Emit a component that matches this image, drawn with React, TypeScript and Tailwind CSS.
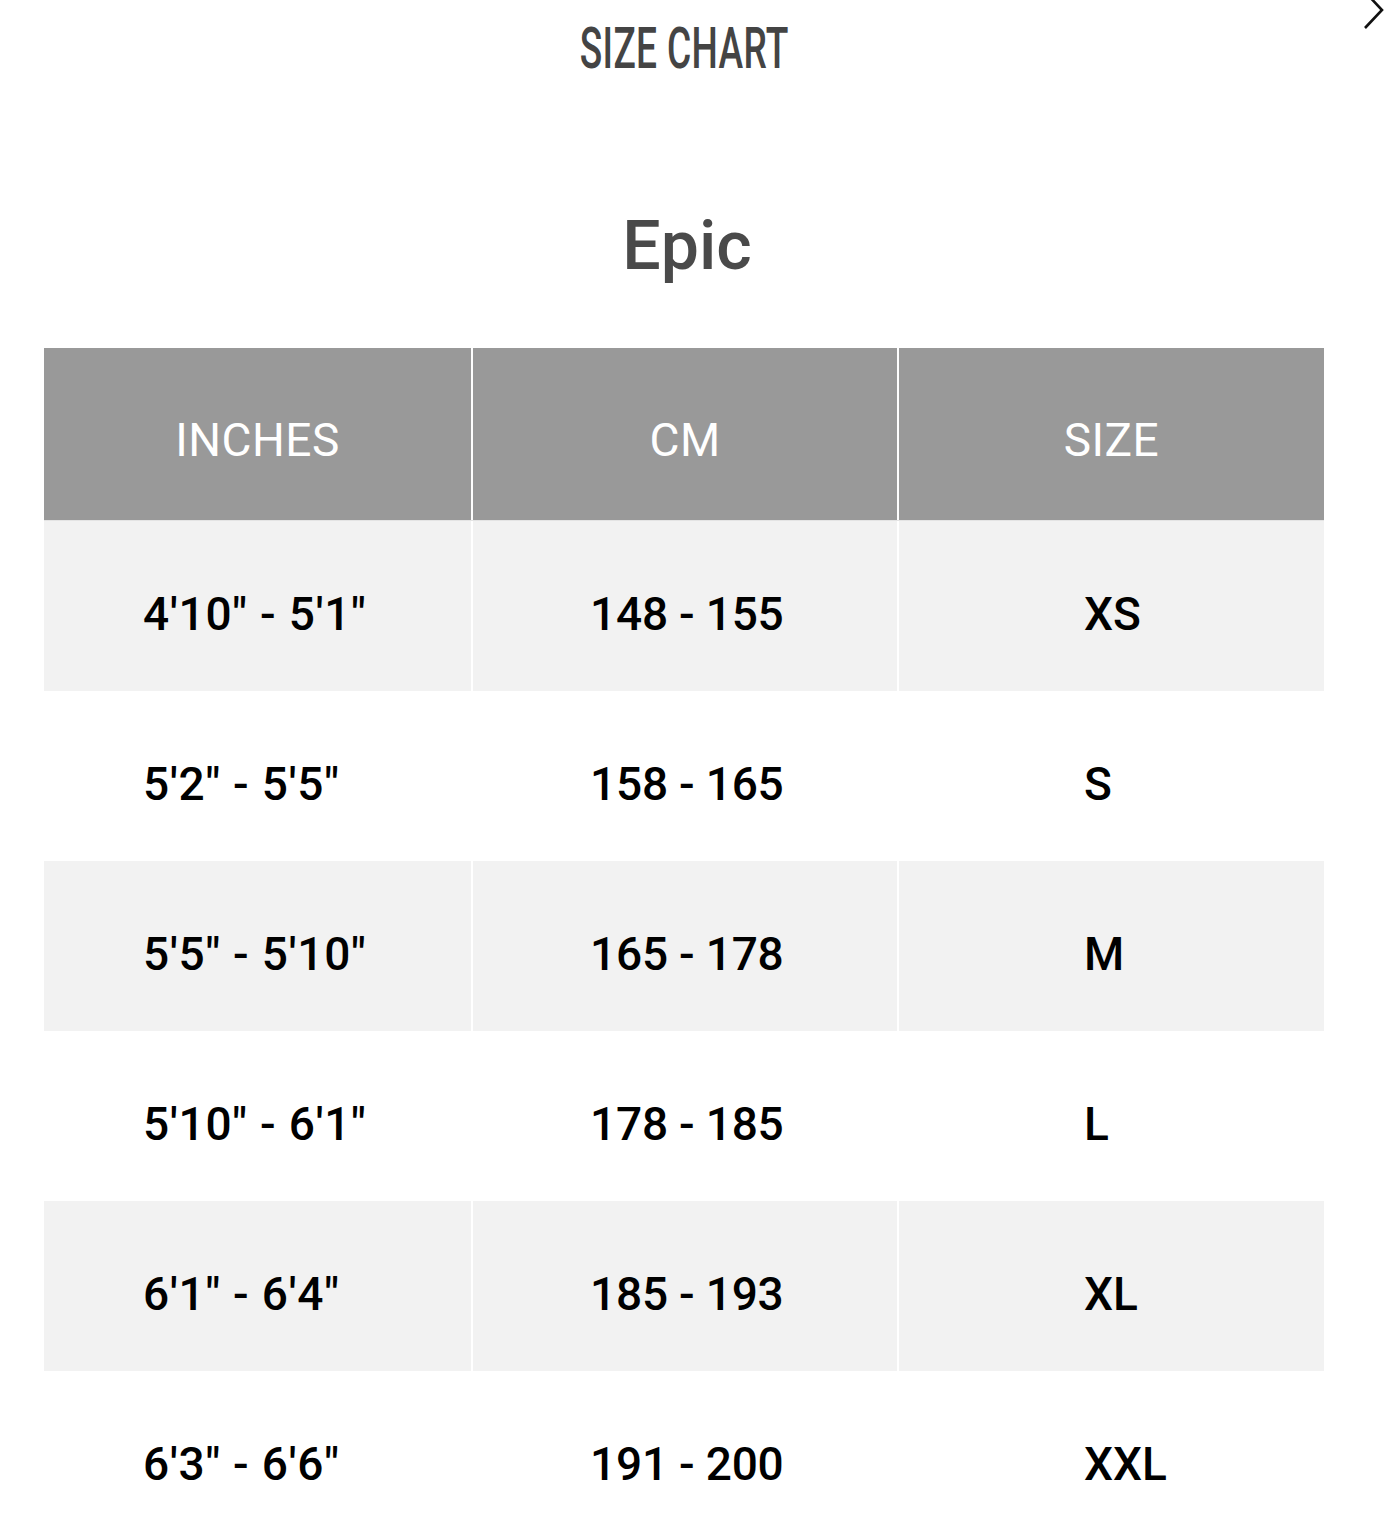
import React from "react";

const rows = [
  ["4'10\" - 5'1\"", "148 - 155", "XS"],
  ["5'2\" - 5'5\"", "158 - 165", "S"],
  ["5'5\" - 5'10\"", "165 - 178", "M"],
  ["5'10\" - 6'1\"", "178 - 185", "L"],
  ["6'1\" - 6'4\"", "185 - 193", "XL"],
  ["6'3\" - 6'6\"", "191 - 200", "XXL"],
];

export default function App() {
  return (
    <div
      className="relative w-[1384px] h-[1532px] overflow-hidden bg-white"
      style={{ fontFamily: "Roboto, 'Liberation Sans', sans-serif" }}
    >
      <svg
        className="absolute right-0 top-0"
        width="26"
        height="34"
        viewBox="0 0 26 34"
        fill="none"
      >
        <path d="M7 -8 L24 10 L7 28" stroke="#111" strokeWidth="2.6" />
      </svg>

      <div className="flex w-[1368px] h-[96px] items-center justify-center">
        <span className="inline-block origin-center scale-x-[0.64] text-[58px] font-medium leading-none text-[#444] tracking-[0.5px]">
          SIZE CHART
        </span>
      </div>

      <div className="flex w-[1368px] h-[150px] items-center justify-center pt-[150px] pl-[6px]">
        <span className="text-[68px] font-medium leading-none text-[#4a4a4a]">Epic</span>
      </div>

      <div className="ml-[44px] mt-[102px] w-[1280px]">
        <div className="grid w-[1280px] grid-cols-[427px_424px_425px] gap-x-[2px] h-[173px] border-b border-[#e4e4e4]">
          {["INCHES", "CM", "SIZE"].map((h) => (
            <div
              key={h}
              className="flex items-center justify-center bg-[#999999] pt-[12px] text-[46px] leading-none text-white tracking-[0.5px]"
            >
              {h}
            </div>
          ))}
        </div>
        {rows.map((r, i) => {
          const bg = i % 2 === 0 ? "bg-[#f2f2f2]" : "bg-white";
          return (
            <div
              key={i}
              className="grid w-[1280px] grid-cols-[427px_424px_425px] gap-x-[2px] h-[170px]"
            >
              <div
                className={`flex items-center pl-[99px] pt-[16px] text-[46px] font-medium leading-none text-black tracking-[0.8px] ${bg}`}
              >
                {r[0]}
              </div>
              <div
                className={`flex items-center pl-[117px] pt-[16px] text-[46px] font-medium leading-none text-black tracking-[-0.2px] ${bg}`}
              >
                {r[1]}
              </div>
              <div
                className={`flex items-center pl-[185px] pt-[16px] text-[46px] font-medium leading-none text-black ${bg}`}
              >
                {r[2]}
              </div>
            </div>
          );
        })}
      </div>
    </div>
  );
}
